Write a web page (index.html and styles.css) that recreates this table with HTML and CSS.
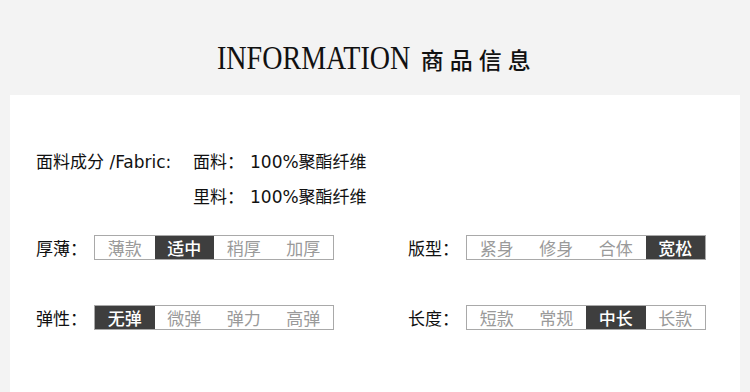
FILE: index.html
```html
<!DOCTYPE html>
<html lang="zh">
<head>
<meta charset="utf-8">
<link rel="stylesheet" href="styles.css">
</head>
<body>
<header class="head">
  <h1 class="title"><span class="title-en">INFORMATION</span><span class="title-cn">商品信息</span></h1>
</header>
<main class="card">
  <div class="fabric">
    <div class="fabric-label">面料成分 /Fabric:</div>
    <div class="fabric-rows">
      <div class="fabric-row"><span class="fabric-key">面料：</span><span class="fabric-val">100%聚酯纤维</span></div>
      <div class="fabric-row"><span class="fabric-key">里料：</span><span class="fabric-val">100%聚酯纤维</span></div>
    </div>
  </div>
  <div class="attrs">
    <div class="attr">
      <span class="attr-label">厚薄：</span>
      <div class="seg"><span>薄款</span><span class="on">适中</span><span>稍厚</span><span>加厚</span></div>
    </div>
    <div class="attr">
      <span class="attr-label">版型：</span>
      <div class="seg"><span>紧身</span><span>修身</span><span>合体</span><span class="on">宽松</span></div>
    </div>
    <div class="attr">
      <span class="attr-label">弹性：</span>
      <div class="seg"><span class="on">无弹</span><span>微弹</span><span>弹力</span><span>高弹</span></div>
    </div>
    <div class="attr">
      <span class="attr-label">长度：</span>
      <div class="seg"><span>短款</span><span>常规</span><span class="on">中长</span><span>长款</span></div>
    </div>
  </div>
</main>
</body>
</html>
```

FILE: styles.css
```css
html, body {
  margin: 0;
  padding: 0;
}
body {
  background: #f3f3f3;
  width: 750px;
  height: 392px;
  overflow: hidden;
  font-family: "DejaVu Sans", "Noto Sans CJK SC", sans-serif;
  color: #111;
}
.head {
  height: 95px;
  display: flex;
  align-items: center;
  justify-content: center;
}
.title {
  margin: 0;
  display: flex;
  align-items: baseline;
  font-weight: normal;
  padding-top: 22px;
  padding-left: 4px;
}
.title-en {
  display: inline-block;
  font-family: "Liberation Serif", serif;
  font-size: 33px;
  color: #111;
  transform: scaleX(0.85);
  transform-origin: left center;
  margin-right: -35px;
}
.title-cn {
  font-family: "Noto Sans CJK SC", sans-serif;
  font-size: 23px;
  font-weight: 500;
  letter-spacing: 6px;
  margin-left: 11px;
  color: #111;
}
.card {
  background: #fff;
  margin: 0 10px;
  height: 297px;
  padding: 50px 0 0 26px;
  box-sizing: border-box;
}
.fabric {
  display: flex;
  font-size: 17px;
  line-height: 35px;
}
.fabric-label {
  width: 157px;
}
.fabric-key {
  display: inline-block;
  width: 57px;
}
.attrs {
  margin-top: 20px;
  display: grid;
  grid-template-columns: 372px 1fr;
  row-gap: 45px;
}
.attr {
  display: flex;
  align-items: center;
}
.attr-label {
  width: 58px;
  font-family: "Noto Sans CJK SC", sans-serif;
  font-size: 17px;
  line-height: 24px;
}
.seg {
  display: flex;
  border: 1px solid #a9a9a9;
}
.seg span {
  width: 59.5px;
  height: 23px;
  line-height: 23px;
  text-align: center;
  font-family: "Noto Sans CJK SC", sans-serif;
  font-size: 17px;
  color: #9a9a9a;
}
.seg span.on {
  background: #3e3e3e;
  color: #fff;
  font-weight: 500;
}
```
